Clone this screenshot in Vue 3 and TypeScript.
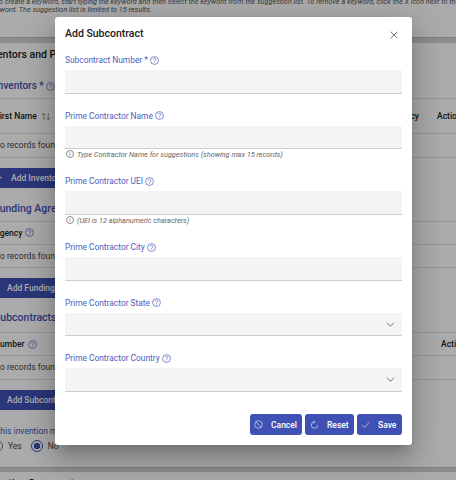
<script setup lang="ts">
interface Field { label: string; hint?: string; select?: boolean }
const fields: Field[] = [
  { label: 'Subcontract Number *' },
  { label: 'Prime Contractor Name', hint: 'Type Contractor Name for suggestions (showing max 15 records)' },
  { label: 'Prime Contractor UEI', hint: '(UEI is 12 alphanumeric characters)' },
  { label: 'Prime Contractor City' },
  { label: 'Prime Contractor State', select: true },
  { label: 'Prime Contractor Country', select: true },
]
</script>

<template>
  <div class="screen">
    <div class="page">
      <p class="intro">To create a keyword, start typing the keyword and then select the keyword from the suggestion list. To remove a keyword, click the X icon next to the<br />keyword. The suggestion list is limited to 15 results.</p>
      <div class="band"></div>
      <h2 class="heading">Inventors and Patents</h2>

      <h3 class="sub inv">Inventors * <svg class="qm" viewBox="0 0 24 24"><circle cx="12" cy="12" r="10.5"/><path d="M8.5 9.5a3.5 3.5 0 1 1 5.4 2.9c-1.2.8-1.9 1.5-1.9 3"/><path d="M12 17.6v1.6"/></svg></h3>
      <div class="row head tall">
        <span class="name first">First Name <svg class="sort" viewBox="0 0 20 16"><path d="M5.5 15V1.5M1.5 5.5l4-4 4 4M14.5 1v13.5M10.5 10.5l4 4 4-4"/></svg></span>
        <span class="cols"><span>Agency</span><span>Actions</span></span>
      </div>
      <div class="row body">No records found</div>
      <button class="bg-btn inv-btn"><span class="plus">+</span>Add Inventor</button>

      <h3 class="sub fund">Funding Agreements</h3>
      <div class="row head"><span class="name">Agency <svg class="qm" viewBox="0 0 24 24"><circle cx="12" cy="12" r="10.5"/><path d="M8.5 9.5a3.5 3.5 0 1 1 5.4 2.9c-1.2.8-1.9 1.5-1.9 3"/><path d="M12 17.6v1.6"/></svg></span></div>
      <div class="row body">No records found</div>
      <button class="bg-btn">Add Funding Agreement</button>

      <h3 class="sub subc">Subcontracts</h3>
      <div class="row head">
        <span class="name">Number <svg class="qm" viewBox="0 0 24 24"><circle cx="12" cy="12" r="10.5"/><path d="M8.5 9.5a3.5 3.5 0 1 1 5.4 2.9c-1.2.8-1.9 1.5-1.9 3"/><path d="M12 17.6v1.6"/></svg></span>
        <span class="act2">Actions</span>
      </div>
      <div class="row body">No records found</div>
      <button class="bg-btn">Add Subcontract</button>

      <p class="question">Did this invention make use of</p>
      <div class="radios">
        <span class="radio"></span><span>Yes</span>
        <span class="radio on"></span><span>No</span>
      </div>
      <div class="band lower"></div>
      <h2 class="heading last">Inventive Comments</h2>
    </div>

    <div class="backdrop"></div>

    <div class="dialog">
      <header class="dialog-head">
        <h1>Add Subcontract</h1>
        <svg class="close" viewBox="0 0 12 12"><path d="M2 2l8 8M10 2l-8 8"/></svg>
      </header>
      <div v-for="f in fields" :key="f.label" class="field">
        <label>{{ f.label }}
          <svg class="qm" viewBox="0 0 24 24"><circle cx="12" cy="12" r="10.5"/><path d="M8.5 9.5a3.5 3.5 0 1 1 5.4 2.9c-1.2.8-1.9 1.5-1.9 3"/><path d="M12 17.6v1.6"/></svg>
        </label>
        <div class="input">
          <svg v-if="f.select" class="chev" viewBox="0 0 12 7"><path d="M1 1l5 5 5-5"/></svg>
        </div>
        <div v-if="f.hint" class="hint">
          <svg class="info" viewBox="0 0 24 24"><circle cx="12" cy="12" r="10.5"/><path d="M12 10.5v7"/><path d="M12 6.5v2"/></svg>
          <em>{{ f.hint }}</em>
        </div>
      </div>
      <footer class="actions">
        <button class="btn cancel"><svg viewBox="0 0 24 24"><circle cx="12" cy="12" r="10"/><path d="M5 5l14 14"/></svg>Cancel</button>
        <button class="btn reset"><svg viewBox="0 0 24 24"><path d="M12 5a8.5 8.5 0 1 0 8.5 8.5"/><path d="M9 1l4 4-4 4"/></svg>Reset</button>
        <button class="btn save"><svg viewBox="0 0 24 24"><path d="M2 13l7 7L22 6"/></svg>Save</button>
      </footer>
    </div>
  </div>
</template>

<style scoped>
.screen {
  position: relative;
  width: 456px;
  height: 480px;
  overflow: hidden;
  background: #fff;
  font-family: Roboto, "Liberation Sans", sans-serif;
}
.page {
  width: 472px;
  margin-left: -6px;
  color: #212121;
  font-size: 8.5px;
}
.intro {
  height: 39px;
  margin: 0 0 0 -5px;
  padding: 0;
  width: 560px;
  transform: translateY(-2px);
  font-size: 7.3px;
  line-height: 7.6px;
  font-style: italic;
  color: #555;
  text-indent: 6px;
}
.band {
  height: 6px;
  box-sizing: border-box;
  background: #d2d2d2;
  border-top: 1px solid #bcbcbc;
  margin-top: -2px;
}
.heading {
  margin: 5px 0 0 -11px;
  font-size: 10.5px;
  font-weight: 500;
  line-height: 14px;
  color: #212121;
}
.sub {
  height: 14px;
  margin: 14px 0 0;
  font-size: 10.5px;
  line-height: 14px;
  font-weight: 500;
  color: #3f51b5;
}
.sub.inv { margin: 17px 0 5px 1px; font-size: 10px; }
.sub.fund { margin-bottom: 5px; }
.sub.subc { margin: 13px 0 7px; }
.sub .qm { vertical-align: -1.5px; }
.row {
  display: flex;
  justify-content: space-between;
  align-items: center;
  height: 23px;
  box-sizing: border-box;
  border-top: 1px solid #e0e0e0;
  color: #444;
}
.row.head { color: #212121; font-weight: 500; }
.row.tall { height: 35px; }
.row.body { height: 24.5px; border-bottom: 1px solid #e0e0e0; }
.name { display: flex; align-items: center; gap: 3px; }
.name.first { margin-left: 1px; }
.sort {
  width: 10px;
  height: 9px;
  margin-left: 1px;
  fill: none;
  stroke: #555;
  stroke-width: 1.2;
}
.cols { display: flex; gap: 18px; white-space: nowrap; }
.act2 { margin-right: -4px; }
.bg-btn {
  display: block;
  width: 130px;
  height: 20px;
  margin-top: 10px;
  padding: 0 0 0 13px;
  text-align: left;
  background: #3f51b5;
  color: #fff;
  border: 0;
  border-radius: 3px;
  font-family: inherit;
  font-size: 8.5px;
  font-weight: 500;
}
.inv-btn { padding-left: 3px; }
.plus { display: inline-block; width: 14px; }
.question {
  margin: 14px 0 0 -11px;
  color: #3f51b5;
  font-size: 8.5px;
  line-height: 14px;
}
.radios {
  display: flex;
  align-items: center;
  height: 14px;
  margin: 1px 0 0 -3px;
  gap: 5px;
  color: #444;
}
.radio {
  flex: none;
  width: 12px;
  height: 12px;
  box-sizing: border-box;
  border: 1px solid #777;
  border-radius: 50%;
}
.radio.on {
  margin-left: 4px;
  border-color: #3f51b5;
  background: radial-gradient(circle, #3f51b5 0 3px, #fff 3.5px);
}
.band.lower { margin-top: 14px; height: 5px; }
.heading.last { margin: 5px 0 0 -11px; }

.backdrop {
  position: absolute;
  inset: 0;
  background: rgba(0, 0, 0, 0.33);
}
.dialog {
  position: absolute;
  left: 55px;
  top: 17px;
  width: 357px;
  height: 428px;
  box-sizing: border-box;
  padding: 6px 10px 10px;
  background: #fff;
  border-radius: 3px;
  box-shadow: 0 8px 11px -5px rgba(0,0,0,.2), 0 17px 27px 2px rgba(0,0,0,.14), 0 6px 32px 6px rgba(0,0,0,.12);
  display: flex;
  flex-direction: column;
}
.dialog-head {
  display: flex;
  justify-content: space-between;
  align-items: center;
  height: 20px;
  margin-bottom: 10px;
}
.dialog-head h1 {
  margin: 0;
  font-size: 10.5px;
  font-weight: 500;
  color: #212121;
}
.close {
  width: 10px;
  height: 10px;
  margin: 4px 3px 0 0;
  fill: none;
  stroke: #666;
  stroke-width: 1.1;
}
.field { margin-bottom: 15px; }
.field label {
  display: flex;
  align-items: center;
  gap: 2px;
  height: 14px;
  margin-bottom: 3px;
  font-size: 8.4px;
  color: #4d5ebc;
}
.qm {
  width: 9px;
  height: 9px;
  fill: none;
  stroke: #3f51b5;
  stroke-width: 1.7;
}
.input {
  position: relative;
  height: 23.7px;
  box-sizing: border-box;
  background: #f4f4f4;
  border-bottom: 1.5px solid #cdcdcd;
  border-radius: 2px 2px 0 0;
}
.chev {
  position: absolute;
  right: 7px;
  top: 9px;
  width: 9px;
  height: 5px;
  fill: none;
  stroke: #666;
  stroke-width: 1.3;
}
.hint {
  display: flex;
  align-items: center;
  gap: 3px;
  height: 10px;
  padding-left: 1px;
  font-size: 7.3px;
  color: #666;
}
.info {
  flex: none;
  width: 8px;
  height: 8px;
  fill: none;
  stroke: #555;
  stroke-width: 2;
}
.actions {
  margin-top: auto;
  display: flex;
  justify-content: flex-end;
  gap: 3px;
}
.btn {
  display: flex;
  align-items: center;
  height: 21px;
  padding: 0 0 0 4px;
  background: #3f51b5;
  color: #fff;
  border: 0;
  border-radius: 3px;
  font-family: inherit;
  font-size: 8.5px;
  font-weight: 500;
}
.btn svg {
  flex: none;
  width: 9px;
  height: 9px;
  margin-right: 8px;
  fill: none;
  stroke: #fff;
  stroke-width: 1.5;
}
.cancel { width: 52px; }
.reset { width: 49px; padding-left: 5px; }
.save { width: 45px; }
</style>
